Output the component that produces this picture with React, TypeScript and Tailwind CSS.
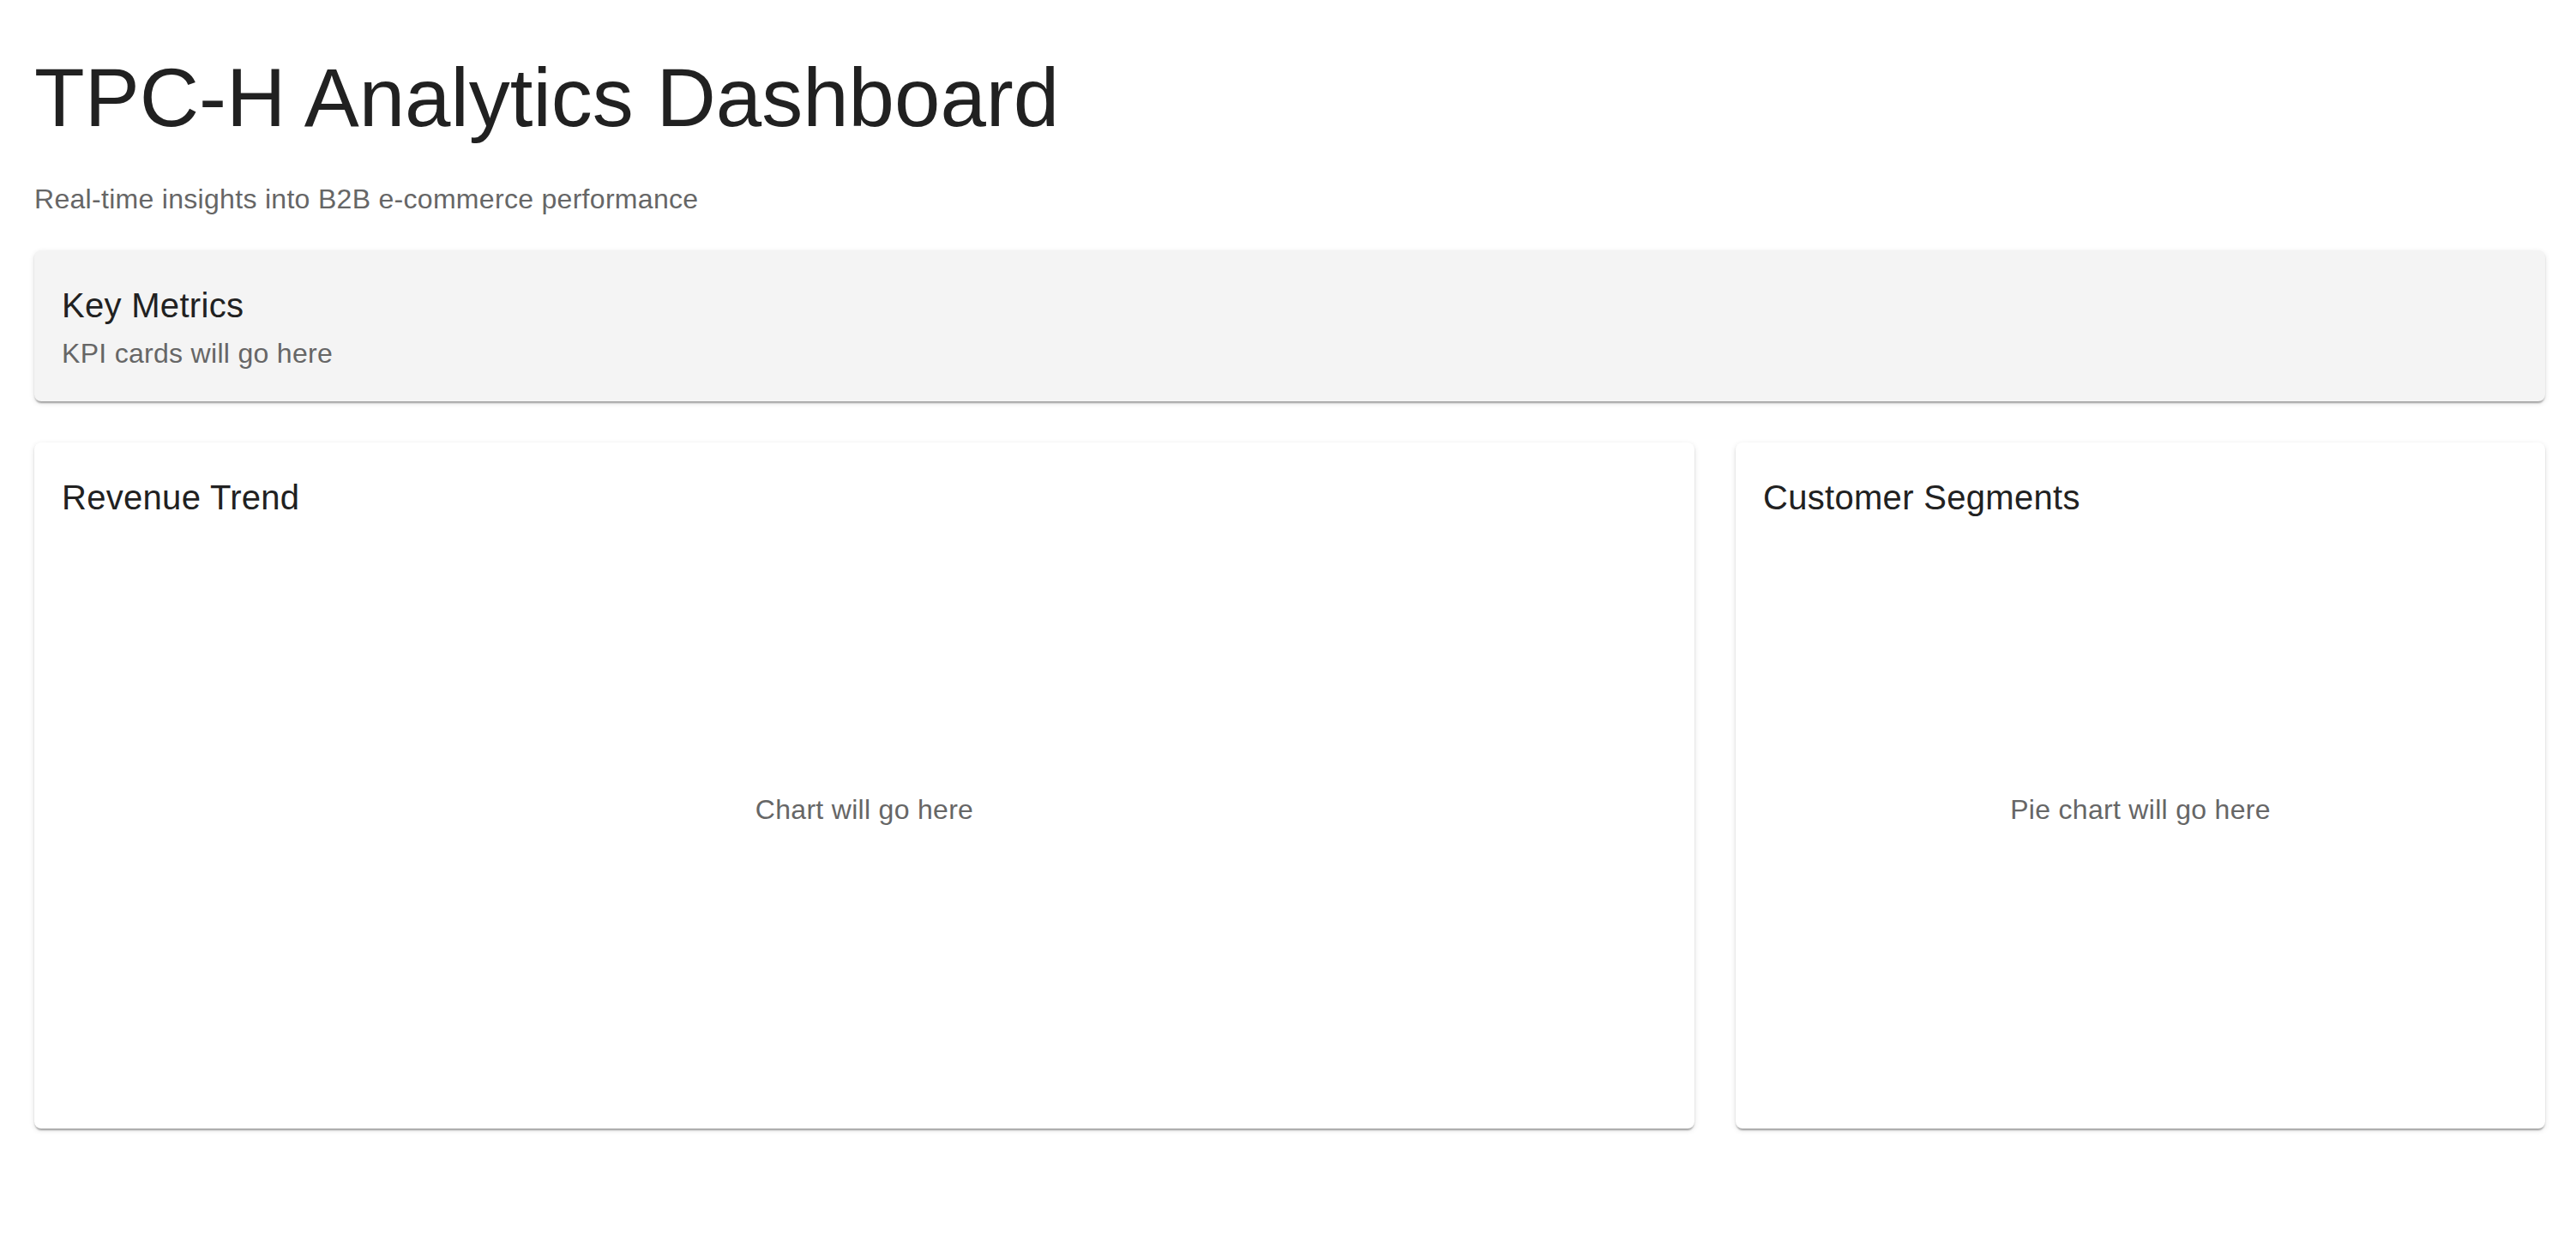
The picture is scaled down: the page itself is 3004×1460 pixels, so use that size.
const cardShadow =
  'shadow-[0_4px_2px_-2px_rgba(0,0,0,0.2),0_2px_2px_0_rgba(0,0,0,0.14),0_2px_6px_0_rgba(0,0,0,0.12)]';

function ChartCard({ title, placeholder, className }: { title: string; placeholder: string; className: string }) {
  return (
    <section className={`flex h-[800px] flex-col rounded-lg bg-white p-8 ${cardShadow} ${className}`}>
      <h2 className="text-[40px] leading-[64px] font-normal tracking-[0.3px] text-[#212121]">{title}</h2>
      <div className="flex flex-1 items-center justify-center pb-2">
        <p className="text-[32px] leading-[48px] tracking-[0.3px] text-[#666666]">{placeholder}</p>
      </div>
    </section>
  );
}

export default function App() {
  return (
    <main className="min-h-screen bg-white pl-[40px] pr-[36px] pt-[58px] pb-12 font-['Liberation_Sans',Arial,sans-serif]">
      <header className="mb-[32px]">
        <h1 className="mb-[34px] text-[96px] leading-[112px] font-normal text-[#212121]">TPC-H Analytics Dashboard</h1>
        <p className="text-[32px] leading-[56px] tracking-[0.3px] text-[#666666]">
          Real-time insights into B2B e-commerce performance
        </p>
      </header>

      <section className={`rounded-lg bg-[#f4f4f4] p-8 ${cardShadow}`}>
        <h2 className="text-[40px] leading-[64px] font-normal tracking-[0.3px] text-[#212121]">Key Metrics</h2>
        <p className="text-[32px] leading-[48px] tracking-[0.3px] text-[#666666]">KPI cards will go here</p>
      </section>

      <div className="mt-12 flex gap-12">
        <ChartCard title="Revenue Trend" placeholder="Chart will go here" className="w-[1936px] shrink-0" />
        <ChartCard title="Customer Segments" placeholder="Pie chart will go here" className="min-w-0 flex-1" />
      </div>
    </main>
  );
}
